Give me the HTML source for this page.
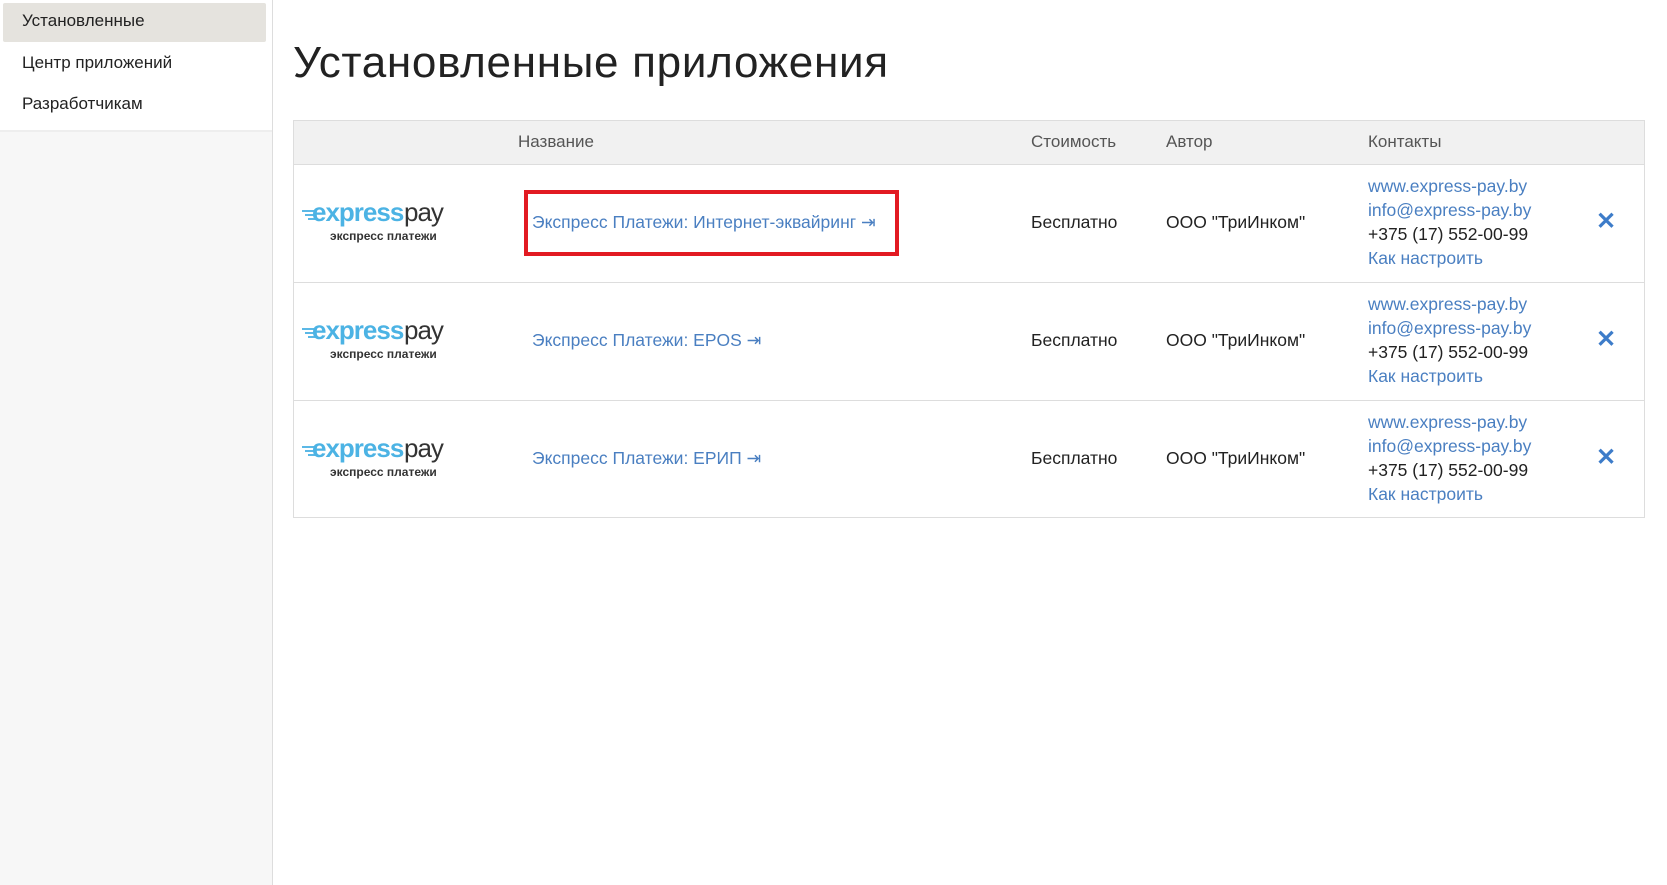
<!DOCTYPE html>
<html><head><meta charset="utf-8"><style>
*{box-sizing:border-box;margin:0;padding:0}
body{width:1667px;height:885px;background:#fff;font-family:"Liberation Sans","Noto Sans CJK SC",sans-serif;color:#222;position:relative;overflow:hidden}
.side{position:absolute;left:0;top:0;width:273px;height:885px;background:#f7f7f7;border-right:1px solid #ddd}
.side .top{background:#fff;height:132px;border-bottom:2px solid #eee}
.side .it{position:absolute;left:22px;font-size:17px;color:#222}
.side .act{position:absolute;left:3px;top:3px;width:263px;height:39px;background:#e5e3de;border-radius:2px}
h1{position:absolute;left:293px;top:38px;font-size:44px;font-weight:normal;color:#222;letter-spacing:0.7px}
.tbl{position:absolute;left:293px;top:120px;width:1352px;height:398px;border:1px solid #ddd}
.hd{position:absolute;left:0;top:0;width:100%;height:44px;background:#f1f1f1;border-bottom:1px solid #ddd}
.hd span{position:absolute;top:11px;font-size:17px;color:#555}
.row{position:absolute;left:0;width:100%;height:118px;border-bottom:1px solid #ddd}
.row:last-child{border-bottom:none}
.a{color:#4a7fc1}
.c{position:absolute;font-size:17.5px}
.logo{position:absolute;left:8px;top:31px;width:160px;height:50px}
.x{position:absolute;left:1302px;font-size:24px;color:#3d7cc9;font-weight:bold}
.ct{position:absolute;left:1074px;top:9px;font-size:17.5px;line-height:24px}
</style></head><body>
<div class="side"><div class="top"></div>
<div class="act"></div>
<div class="it" style="top:11px">Установленные</div>
<div class="it" style="top:53px">Центр приложений</div>
<div class="it" style="top:94px">Разработчикам</div>
</div>
<h1>Установленные приложения</h1>
<div class="tbl">
<div class="hd"><span style="left:224px">Название</span><span style="left:737px">Стоимость</span><span style="left:872px">Автор</span><span style="left:1074px">Контакты</span></div>
<div class="row" style="top:44px">
<svg class="logo" viewBox="0 0 160 50"><g stroke="#5bb8e6" stroke-width="2"><line x1="0" y1="15" x2="14" y2="15"/><line x1="3" y1="19" x2="14" y2="19"/><line x1="6" y1="23" x2="14" y2="23"/></g><text x="10" y="25" font-family="Liberation Sans" font-weight="bold" font-size="26" fill="#4cb3e4" letter-spacing="-1">express</text><text x="102" y="25" font-family="Liberation Sans" font-size="26" fill="#333" letter-spacing="-1">pay</text><text x="28" y="44" font-family="Liberation Sans" font-size="12" fill="#333" font-weight="bold">экспресс платежи</text></svg>
<div style="position:absolute;left:230px;top:25px;width:375px;height:66px;border:4px solid #e21a22"></div>
<div class="c a" style="left:238px;top:47px">Экспресс Платежи: Интернет-эквайринг ⇥</div>
<div class="c" style="left:737px;top:47px">Бесплатно</div>
<div class="c" style="left:872px;top:47px">ООО "ТриИнком"</div>
<div class="ct"><div class="a">www.express-pay.by</div><div class="a">info@express-pay.by</div><div>+375 (17) 552-00-99</div><div class="a">Как настроить</div></div>
<div class="x" style="top:42px">✕</div>
</div>
<div class="row" style="top:162px">
<svg class="logo" viewBox="0 0 160 50"><g stroke="#5bb8e6" stroke-width="2"><line x1="0" y1="15" x2="14" y2="15"/><line x1="3" y1="19" x2="14" y2="19"/><line x1="6" y1="23" x2="14" y2="23"/></g><text x="10" y="25" font-family="Liberation Sans" font-weight="bold" font-size="26" fill="#4cb3e4" letter-spacing="-1">express</text><text x="102" y="25" font-family="Liberation Sans" font-size="26" fill="#333" letter-spacing="-1">pay</text><text x="28" y="44" font-family="Liberation Sans" font-size="12" fill="#333" font-weight="bold">экспресс платежи</text></svg>
<div class="c a" style="left:238px;top:47px">Экспресс Платежи: EPOS ⇥</div>
<div class="c" style="left:737px;top:47px">Бесплатно</div>
<div class="c" style="left:872px;top:47px">ООО "ТриИнком"</div>
<div class="ct"><div class="a">www.express-pay.by</div><div class="a">info@express-pay.by</div><div>+375 (17) 552-00-99</div><div class="a">Как настроить</div></div>
<div class="x" style="top:42px">✕</div>
</div>
<div class="row" style="top:280px">
<svg class="logo" viewBox="0 0 160 50"><g stroke="#5bb8e6" stroke-width="2"><line x1="0" y1="15" x2="14" y2="15"/><line x1="3" y1="19" x2="14" y2="19"/><line x1="6" y1="23" x2="14" y2="23"/></g><text x="10" y="25" font-family="Liberation Sans" font-weight="bold" font-size="26" fill="#4cb3e4" letter-spacing="-1">express</text><text x="102" y="25" font-family="Liberation Sans" font-size="26" fill="#333" letter-spacing="-1">pay</text><text x="28" y="44" font-family="Liberation Sans" font-size="12" fill="#333" font-weight="bold">экспресс платежи</text></svg>
<div class="c a" style="left:238px;top:47px">Экспресс Платежи: ЕРИП ⇥</div>
<div class="c" style="left:737px;top:47px">Бесплатно</div>
<div class="c" style="left:872px;top:47px">ООО "ТриИнком"</div>
<div class="ct"><div class="a">www.express-pay.by</div><div class="a">info@express-pay.by</div><div>+375 (17) 552-00-99</div><div class="a">Как настроить</div></div>
<div class="x" style="top:42px">✕</div>
</div>
</div>
</body></html>
